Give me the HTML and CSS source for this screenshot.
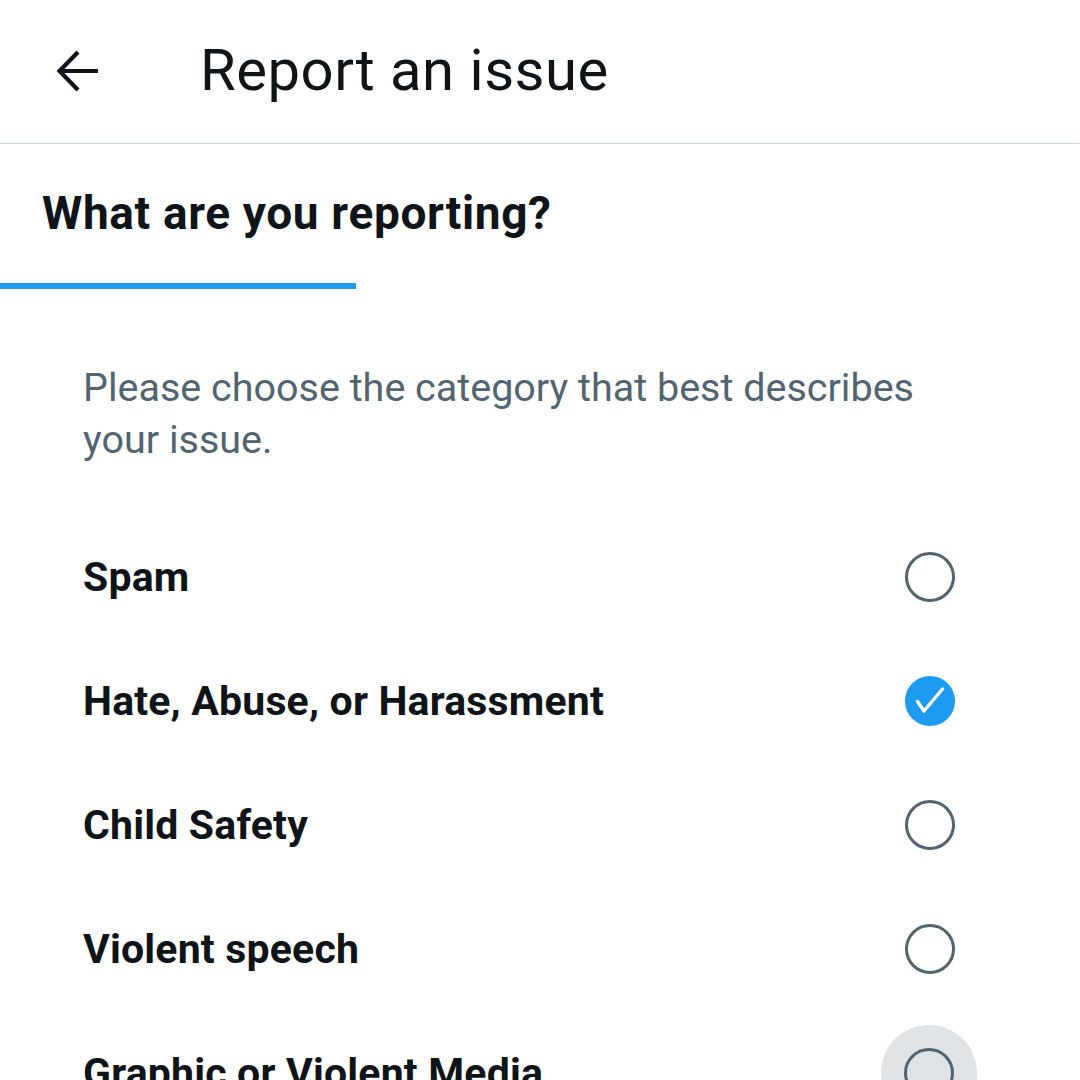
FILE: index.html
```html
<!DOCTYPE html>
<html>
<head>
<meta charset="utf-8">
<link rel="stylesheet" href="styles.css">
</head>
<body>
<div class="app">
  <header class="topbar">
    <span class="back">
      <svg width="48" height="48" viewBox="0 0 48 48"><path d="M44 24H6M24 5L5.5 24 24 43" fill="none" stroke="#0f1419" stroke-width="4.2" stroke-linecap="butt" stroke-linejoin="miter"/></svg>
    </span>
    <h1 class="title">Report an issue</h1>
  </header>
  <div class="tabs">
    <div class="tab">
      <span class="tab-label">What are you reporting?</span>
      <span class="tab-bar"></span>
    </div>
  </div>
  <p class="desc">Please choose the category that best describes your issue.</p>
  <ul class="options">
    <li class="option"><span class="label">Spam</span><span class="radio"></span></li>
    <li class="option"><span class="label">Hate, Abuse, or Harassment</span><span class="radio checked"><svg width="44" height="44" viewBox="0 0 44 44"><path d="M9.5 22.5L16 32 34.5 10" fill="none" stroke="#fff" stroke-width="3.4" stroke-linecap="round" stroke-linejoin="round"/></svg></span></li>
    <li class="option"><span class="label">Child Safety</span><span class="radio"></span></li>
    <li class="option"><span class="label">Violent speech</span><span class="radio"></span></li>
    <li class="option"><span class="label">Graphic or Violent Media</span><span class="radio-wrap"><span class="radio"></span></span></li>
  </ul>
</div>
</body>
</html>
```
FILE: styles.css
```css
html, body {
  margin: 0;
  padding: 0;
  background: #ffffff;
  overflow: hidden;
}
body {
  width: 1080px;
  height: 1080px;
  font-family: Roboto, "Noto Sans", sans-serif;
  color: #0f1419;
}
.app {
  display: flex;
  flex-direction: column;
}
.topbar {
  height: 143px;
  display: flex;
  align-items: center;
  border-bottom: 1px solid #cfd9de;
  box-sizing: content-box;
  padding-left: 54px;
}
.back {
  display: flex;
  width: 48px;
  height: 48px;
  margin-top: -2px;
}
.title {
  margin: 0 0 0 98px;
  font-size: 58px;
  font-weight: 400;
  letter-spacing: 0.5px;
  margin-top: -4px;
}
.tabs {
  display: flex;
}
.tab {
  display: flex;
  flex-direction: column;
  width: 356px;
}
.tab-label {
  font-weight: 700;
  font-size: 46px;
  padding-left: 42px;
  white-space: nowrap;
  margin-top: 43px;
  letter-spacing: 0.65px;
  line-height: 52px;
}
.tab-bar {
  height: 6px;
  background: #1d9bf0;
  margin-top: 44px;
}
.desc {
  margin: 73px 100px 0 83px;
  font-size: 39.5px;
  line-height: 52px;
  color: #536471;
}
.options {
  list-style: none;
  margin: 49px 0 0 0;
  padding: 0 125px 0 83px;
  display: flex;
  flex-direction: column;
}
.option {
  height: 124px;
  display: flex;
  align-items: center;
  justify-content: space-between;
}
.label {
  font-weight: 700;
  font-size: 41px;
  letter-spacing: 0.18px;
}
.radio {
  width: 44px;
  height: 44px;
  border: 3.5px solid #536471;
  border-radius: 50%;
  display: flex;
  align-items: center;
  justify-content: center;
}
.radio.checked {
  background: #1d9bf0;
  border-color: #1d9bf0;
}
.radio-wrap {
  width: 96px;
  height: 96px;
  margin-right: -22px;
  border-radius: 50%;
  background: #dfe3e6;
  display: flex;
  align-items: center;
  justify-content: center;
}
```
